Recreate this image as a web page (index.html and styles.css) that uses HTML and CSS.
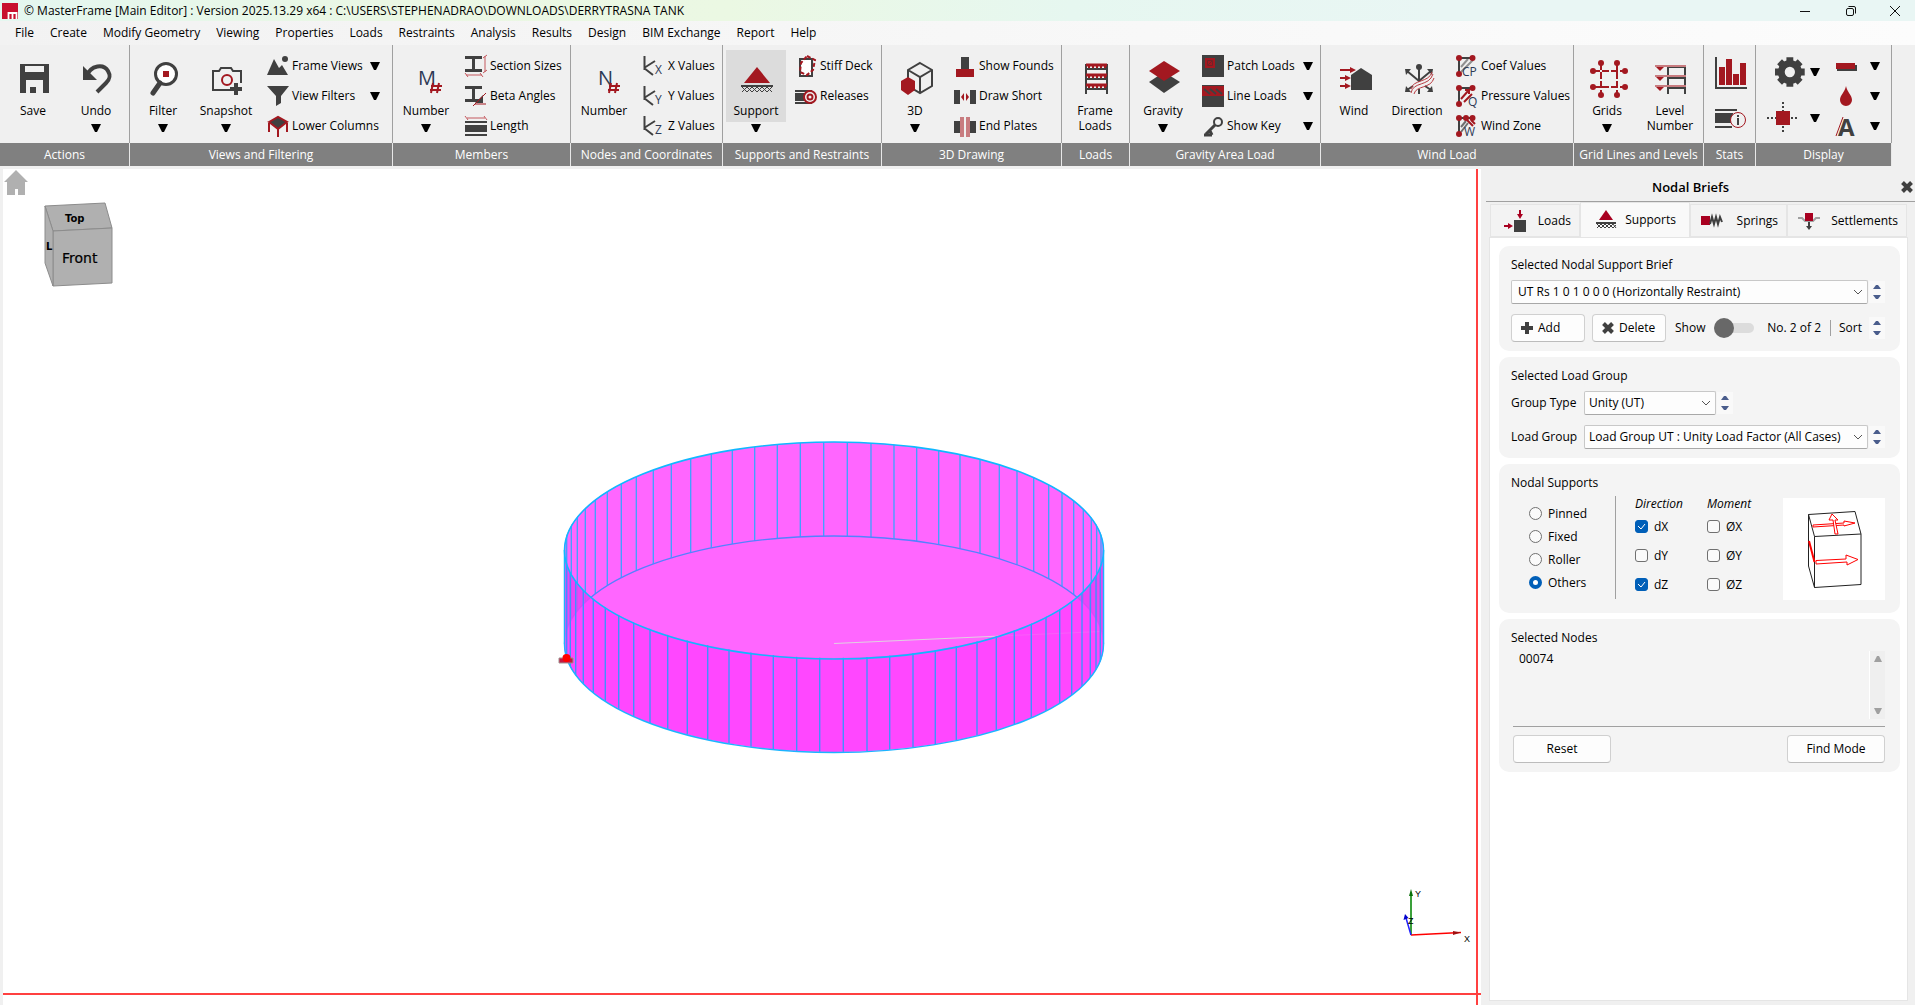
FILE: index.html
```html
<!DOCTYPE html>
<html lang="en">
<head>
<meta charset="utf-8">
<title>MasterFrame [Main Editor]</title>
<link rel="stylesheet" href="styles.css">
</head>
<body>
<svg class="defs" aria-hidden="true">
  <symbol id="arrow" viewBox="0 0 10 8"><path d="M0 0H10L6 8H4Z"/></symbol>
  <symbol id="spin-up" viewBox="0 0 8 5"><path d="M0 5L3 1H5L8 5Z" fill="#4a5d8c"/></symbol>
  <symbol id="spin-down" viewBox="0 0 8 5"><path d="M0 0L3 4H5L8 0Z" fill="#4a5d8c"/></symbol>
  <symbol id="ibeam" viewBox="0 0 22 22"><path d="M0 1H17V4H10V14H17V17H0V14H7V4H0Z" fill="#404040"/></symbol>
  <symbol id="axes" viewBox="0 0 22 22"><path d="M1.500 1V15M1 13L12 6M1 13L10 20" fill="none" stroke="#404040" stroke-width="2"/></symbol>
  <symbol id="windframe" viewBox="0 0 22 22"><path d="M3 3H17M3 3V18" stroke="#404040" stroke-width="2"/><circle cx="3" cy="3" r="3"/><circle cx="16.500" cy="3" r="3"/><circle cx="3" cy="19" r="3"/></symbol>
</svg>

<header class="titlebar">
  <svg class="logo" viewBox="0 0 16 16"><path d="M0 0H16V16H0Z" fill="#c8102e"/><path d="M6.500 16V10H14.500V16M10.500 10V16" fill="none" stroke="#fff" stroke-width="1.800"/></svg>
  <span class="title">© MasterFrame [Main Editor] : Version 2025.13.29 x64 : C:\USERS\STEPHENADRAO\DOWNLOADS\DERRYTRASNA TANK</span>
  <button class="win" aria-label="Minimise"><svg viewBox="0 0 12 12"><path d="M1 6.500H11"/></svg></button>
  <button class="win" aria-label="Restore"><svg viewBox="0 0 12 12"><rect x="1.500" y="3.500" width="7" height="7" rx="1.500"/><path d="M3.500 1.500H9Q10.500 1.500 10.500 3V8.500"/></svg></button>
  <button class="win" aria-label="Close"><svg viewBox="0 0 12 12"><path d="M1 1L11 11M11 1L1 11"/></svg></button>
</header>

<nav class="menu">
  <button>File</button><button>Create</button><button>Modify Geometry</button><button>Viewing</button><button>Properties</button><button>Loads</button><button>Restraints</button><button>Analysis</button><button>Results</button><button>Design</button><button>BIM Exchange</button><button>Report</button><button>Help</button>
</nav>

<div class="ribbon">
  <section class="group">
    <div class="tools">
      <div class="tool"><button class="big"><svg viewBox="0 0 40 40"><path d="M7 5H36V34H7ZM12 7V13H31V7ZM13 21V34H30V21Z" fill="#404040" fill-rule="evenodd"/><path d="M17 28H23V34H17Z" fill="#404040"/></svg>Save</button></div>
      <div class="tool"><button class="big"><svg viewBox="0 0 40 40"><path d="M10 18C15 5 28 5 32 12C35 17 34 20 30 24L21 33" fill="none" stroke="#404040" stroke-width="4"/><path d="M7 7V21H21Z" fill="#404040"/></svg>Undo</button><button class="drop" aria-label="Undo options"><svg><use href="#arrow"/></svg></button></div>
    </div>
    <h2>Actions</h2>
  </section>
  <section class="group views">
    <div class="tools">
      <div class="tool"><button class="big"><svg viewBox="0 0 40 40"><circle cx="23" cy="15" r="10.500" fill="#fff" stroke="#404040" stroke-width="3"/><path d="M20 12H26V18H20Z" fill="#a31820"/><path d="M17 24L10 34" stroke="#404040" stroke-width="5" stroke-linecap="round"/></svg>Filter</button><button class="drop" aria-label="Filter options"><svg><use href="#arrow"/></svg></button></div>
      <div class="tool"><button class="big"><svg viewBox="0 0 40 40"><path d="M24 31H7V12H13L15 9H25L27 12H35V24" fill="none" stroke="#404040" stroke-width="2"/><circle cx="21" cy="21" r="5" fill="none" stroke="#a31820" stroke-width="2"/><path d="M30 24V36M24 30H36" stroke="#404040" stroke-width="4"/></svg>Snapshot</button><button class="drop" aria-label="Snapshot options"><svg><use href="#arrow"/></svg></button></div>
      <ul class="rows">
        <li><button class="small"><svg viewBox="0 0 22 22"><path d="M0 20L7 4L12 13L15 10L21 20Z" fill="#404040"/><circle cx="18" cy="4" r="3" fill="#404040"/></svg>Frame Views</button><button class="drop" aria-label="Frame Views options"><svg><use href="#arrow"/></svg></button></li>
        <li><button class="small"><svg viewBox="0 0 22 22"><path d="M0 1H22L14 11V18L9 21V11Z" fill="#404040"/></svg>View Filters</button><button class="drop" aria-label="View Filters options"><svg><use href="#arrow"/></svg></button></li>
        <li><button class="small"><svg viewBox="0 0 22 22"><path d="M2 7L11 2L20 7L11 14Z" fill="#404040" stroke="#a31820" stroke-width="2"/><path d="M2 8V17M20 8V17M11 14V22" stroke="#a31820" stroke-width="2"/></svg>Lower Columns</button></li>
      </ul>
    </div>
    <h2>Views and Filtering</h2>
  </section>
  <section class="group">
    <div class="tools">
      <div class="tool"><button class="big"><svg viewBox="0 0 40 40"><text x="12" y="26" class="letter">M</text><path d="M27 24L25 34M33 24L31 34M25 27H36M24 31H35" stroke="#a31820" stroke-width="2"/></svg>Number</button><button class="drop" aria-label="Number options"><svg><use href="#arrow"/></svg></button></div>
      <ul class="rows">
        <li><button class="small"><svg viewBox="0 0 22 22"><use href="#ibeam"/><path d="M20 1V17M1 20H17M18 3L22 0M18 18L22 15M0 18L3 22M15 18L18 22" stroke="#c4585e"/></svg>Section Sizes</button></li>
        <li><button class="small"><svg viewBox="0 0 22 22"><use href="#ibeam"/><path d="M10 18L18 10V18Z" fill="#404040"/><path d="M8 21L21 8M10 19H21" stroke="#a31820"/></svg>Beta Angles</button></li>
        <li><button class="small"><svg viewBox="0 0 22 22"><path d="M0 7H22M0 20H22" stroke="#404040" stroke-width="2"/><path d="M0 10H22V17H0Z" fill="#404040"/><path d="M2 3H20M0 1L3 5M19 1L22 5" stroke="#c4585e"/></svg>Length</button></li>
      </ul>
    </div>
    <h2>Members</h2>
  </section>
  <section class="group">
    <div class="tools">
      <div class="tool"><button class="big"><svg viewBox="0 0 40 40"><text x="14" y="26" class="letter">N</text><path d="M27 24L25 34M33 24L31 34M25 27H36M24 31H35" stroke="#a31820" stroke-width="2"/></svg>Number</button></div>
      <ul class="rows">
        <li><button class="small"><svg viewBox="0 0 22 22"><use href="#axes"/><text x="12" y="19" class="sub">X</text></svg>X Values</button></li>
        <li><button class="small"><svg viewBox="0 0 22 22"><use href="#axes"/><text x="12" y="19" class="sub">Y</text></svg>Y Values</button></li>
        <li><button class="small"><svg viewBox="0 0 22 22"><use href="#axes"/><text x="12" y="19" class="sub">Z</text></svg>Z Values</button></li>
      </ul>
    </div>
    <h2>Nodes and Coordinates</h2>
  </section>
  <section class="group">
    <div class="tools">
      <div class="tool"><button class="big active"><svg viewBox="0 0 40 40"><path d="M21 8L34 24H8Z" fill="#a31820"/><path d="M5 27H37" stroke="#404040" stroke-width="2"/><path d="M6 33L11 28L16 33L21 28L26 33L31 28L36 33M6 28L11 33L16 28L21 33L26 28L31 33L36 28" fill="none" stroke="#404040"/></svg>Support</button><button class="drop" aria-label="Support options"><svg><use href="#arrow"/></svg></button></div>
      <ul class="rows">
        <li><button class="small"><svg viewBox="0 0 22 22"><path d="M5 4H17V21H5Z" fill="#fff" stroke="#404040" stroke-width="2"/><path d="M12 1L20 5L18 15L12 20L5 17L6 8Z" fill="none" stroke="#a31820" stroke-width="2" stroke-dasharray="4 2"/></svg>Stiff Deck</button></li>
        <li><button class="small"><svg viewBox="0 0 22 22"><path d="M0 6H17M0 18H17" stroke="#404040" stroke-width="2"/><path d="M0 8H10V16H0Z" fill="#404040"/><circle cx="15" cy="12" r="6" fill="none" stroke="#a31820" stroke-width="2"/><circle cx="15" cy="12" r="2.500" fill="none" stroke="#a31820" stroke-width="2"/></svg>Releases</button></li>
      </ul>
    </div>
    <h2>Supports and Restraints</h2>
  </section>
  <section class="group">
    <div class="tools">
      <div class="tool"><button class="big"><svg viewBox="0 0 40 40"><path d="M25 4L37 11V27L25 34L13 27V11ZM13 11L25 18L37 11M25 18V34" fill="none" stroke="#404040" stroke-width="2"/><path d="M13 18L20 22V31L13 36L6 31V22Z" fill="#a31820"/></svg>3D</button><button class="drop" aria-label="3D options"><svg><use href="#arrow"/></svg></button></div>
      <ul class="rows">
        <li><button class="small"><svg viewBox="0 0 22 22"><path d="M7 2H15V14H7Z" fill="#404040"/><path d="M2 14H20V22H2Z" fill="#a31820"/></svg>Show Founds</button></li>
        <li><button class="small"><svg viewBox="0 0 22 22"><path d="M0 5H6V19H0ZM16 5H22V19H16Z" fill="#404040"/><path d="M7 12L10 8V16ZM15 12L12 8V16Z" fill="#a31820"/></svg>Draw Short</button></li>
        <li><button class="small"><svg viewBox="0 0 22 22"><path d="M0 6H6V18H0ZM16 6H22V18H16Z" fill="#404040"/><path d="M6 2H10V22H6ZM12 2H16V22H12Z" fill="#c87c80"/></svg>End Plates</button></li>
      </ul>
    </div>
    <h2>3D Drawing</h2>
  </section>
  <section class="group">
    <div class="tools">
      <div class="tool"><button class="big"><svg viewBox="0 0 40 40"><path d="M11 35V5M32 35V5M11 10H32M11 20H32M11 30H32" stroke="#404040" stroke-width="2"/><path d="M11 6H32M11 16H32M11 26H32" stroke="#a31820" stroke-width="3"/><path d="M13 8H31M13 18H31M13 28H31" stroke="#a31820" stroke-width="2" stroke-dasharray="2 2"/></svg>Frame<br>Loads</button></div>
    </div>
    <h2>Loads</h2>
  </section>
  <section class="group gravity">
    <div class="tools">
      <div class="tool"><button class="big"><svg viewBox="0 0 40 40"><path d="M6 23L21 13L37 23L21 34Z" fill="#404040"/><path d="M6 12L21 2L37 12L21 22Z" fill="#a31820"/></svg>Gravity</button><button class="drop" aria-label="Gravity options"><svg><use href="#arrow"/></svg></button></div>
      <ul class="rows">
        <li><button class="small"><svg viewBox="0 0 22 22"><path d="M0 0H22V22H0Z" fill="#404040"/><path d="M3 3H13V13H3Z" fill="#a31820"/><path d="M5.500 5.500H10.500V10.500H5.500ZM6 10L10 6" fill="none" stroke="#702428"/></svg>Patch Loads</button><button class="drop" aria-label="Patch Loads options"><svg><use href="#arrow"/></svg></button></li>
        <li><button class="small"><svg viewBox="0 0 22 22"><path d="M0 0H22V22H0Z" fill="#404040"/><path d="M0 1H22V11H0Z" fill="#a31820"/><path d="M2 4L8 9M8 4L14 9M14 4L20 9" stroke="#404040" stroke-width="2"/></svg>Line Loads</button><button class="drop" aria-label="Line Loads options"><svg><use href="#arrow"/></svg></button></li>
        <li><button class="small"><svg viewBox="0 0 22 22"><circle cx="16" cy="7" r="4" fill="none" stroke="#404040" stroke-width="2"/><path d="M13 10L4 19M2 20H10M8 16L10 20" fill="none" stroke="#404040" stroke-width="3"/></svg>Show Key</button><button class="drop" aria-label="Show Key options"><svg><use href="#arrow"/></svg></button></li>
      </ul>
    </div>
    <h2>Gravity Area Load</h2>
  </section>
  <section class="group">
    <div class="tools">
      <div class="tool"><button class="big"><svg viewBox="0 0 40 40"><path d="M17 16L27 9L38 16V31H17Z" fill="#404040"/><path d="M6 11H16M6 19H11M6 27H11" stroke="#a31820" stroke-width="2"/><path d="M16 8L22 11L16 14ZM11 16L17 19L11 22ZM11 24L17 27L11 30Z" fill="#a31820"/></svg>Wind</button></div>
      <div class="tool"><button class="big"><svg viewBox="0 0 40 40"><path d="M22 8V22M22 30V35M10 12L22 22L34 12M10 31L16 27M34 31L28 27" fill="none" stroke="#404040" stroke-width="2"/><circle cx="22" cy="8" r="3" fill="#404040"/><path d="M8 10H14L9 16ZM36 10H30L35 16ZM8 33H14L9 27ZM36 33H30L35 27Z" fill="#404040"/><path d="M14 34C16 22 32 28 36 15M14 30C16 20 32 24 35 13M17 35C19 26 34 30 37 19" fill="none" stroke="#b8383f" stroke-width="1"/></svg>Direction</button><button class="drop" aria-label="Direction options"><svg><use href="#arrow"/></svg></button></div>
      <ul class="rows">
        <li><button class="small"><svg class="red" viewBox="0 0 22 22"><path d="M5 12L12 4M5 17L17 5" stroke="#909090" stroke-width="2"/><use href="#windframe"/><text x="6" y="21" class="sub">CP</text></svg>Coef Values</button></li>
        <li><button class="small"><svg class="red" viewBox="0 0 22 22"><use href="#windframe"/><path d="M5 14L12 6M9 5H13V9M8 17L16 9" fill="none" stroke="#a31820" stroke-width="2"/><text x="12" y="21" class="sub">Q</text></svg>Pressure Values</button></li>
        <li><button class="small"><svg class="red" viewBox="0 0 22 22"><path d="M5 12L10 6M5 17L12 8" stroke="#707070" stroke-width="2"/><use href="#windframe"/><circle cx="10" cy="3" r="3"/><path d="M11 5L17 11M15 5L19 9" stroke="#a31820" stroke-width="2"/><text x="8" y="21" class="sub">W</text></svg>Wind Zone</button></li>
      </ul>
    </div>
    <h2>Wind Load</h2>
  </section>
  <section class="group">
    <div class="tools">
      <div class="tool"><button class="big"><svg viewBox="0 0 40 40"><path d="M14 4V36M30 4V36M6 12H38M6 28H38" stroke="#a31820" stroke-width="2" stroke-dasharray="7 2"/><g fill="#a31820"><circle cx="14" cy="4" r="3"/><circle cx="30" cy="4" r="3"/><circle cx="14" cy="36" r="3"/><circle cx="30" cy="36" r="3"/><circle cx="6" cy="12" r="3"/><circle cx="38" cy="12" r="3"/><circle cx="6" cy="28" r="3"/><circle cx="38" cy="28" r="3"/></g></svg>Grids</button><button class="drop" aria-label="Grids options"><svg><use href="#arrow"/></svg></button></div>
      <div class="tool"><button class="big"><svg viewBox="0 0 40 40"><path d="M18 35V8H35V35M18 19H35M18 29H35" fill="none" stroke="#404040" stroke-width="2"/><path d="M5 7H36M5 17H36M5 27H36" stroke="#c87c80" stroke-width="2"/><path d="M6 8H14L10 12ZM6 18H14L10 22ZM6 28H14L10 32Z" fill="#a31820"/></svg>Level<br>Number</button></div>
    </div>
    <h2>Grid Lines and Levels</h2>
  </section>
  <section class="group">
    <div class="tools stats">
      <button class="icon" aria-label="Statistics"><svg class="large" viewBox="0 0 32 32"><path d="M1 0V31H32" fill="none" stroke="#404040" stroke-width="2"/><path d="M4 10H10V28H4ZM11 2H17V28H11ZM18 17H24V28H18ZM25 6H31V28H25Z" fill="#a31820"/></svg></button>
      <button class="icon" aria-label="Member information"><svg class="large" viewBox="0 0 32 32"><path d="M0 7H22M0 24H17" stroke="#404040" stroke-width="2"/><path d="M0 10H18V20H0Z" fill="#404040"/><circle cx="23" cy="17" r="7.500" fill="#f0f0f0" stroke="#a31820"/><path d="M23 12V14M23 15V22" stroke="#404040" stroke-width="2"/></svg></button>
    </div>
    <h2>Stats</h2>
  </section>
  <section class="group">
    <div class="tools display">
      <div class="pairs">
        <div class="pair"><button class="icon" aria-label="Display settings"><svg class="large" viewBox="-4 2 28 28"><path d="M16 3V29M3 16H29M7 7L25 25M25 7L7 25" stroke="#404040" stroke-width="6"/><circle cx="16" cy="16" r="7.500" fill="#f0f0f0" stroke="#404040" stroke-width="6"/></svg></button><button class="drop" aria-label="Settings options"><svg><use href="#arrow"/></svg></button></div>
        <div class="pair"><button class="icon" aria-label="Node display"><svg class="large" viewBox="0 0 32 32"><path d="M16 0V32M0 16H32" stroke="#404040" stroke-width="2" stroke-dasharray="2 2"/><path d="M9 9H23V23H9Z" fill="#a31820"/></svg></button><button class="drop" aria-label="Node display options"><svg><use href="#arrow"/></svg></button></div>
      </div>
      <ul class="rows">
        <li><button class="small" aria-label="Member colour"><svg viewBox="0 0 22 22"><path d="M2 10H22V16H2Z" fill="#404040"/><path d="M1 8H20V14H1Z" fill="#a31820"/></svg></button><button class="drop" aria-label="Member colour options"><svg><use href="#arrow"/></svg></button></li>
        <li><button class="small" aria-label="Ink colour"><svg viewBox="0 0 22 22"><path d="M11 1C12 7 17 10 17 15A6 6 0 0 1 5 15C5 10 10 7 11 1Z" fill="#a31820"/></svg></button><button class="drop" aria-label="Ink colour options"><svg><use href="#arrow"/></svg></button></li>
        <li><button class="small" aria-label="Text style"><svg viewBox="0 0 22 22"><path d="M1 21L8 2" stroke="#a31820"/><text x="3" y="21" class="face">A</text></svg></button><button class="drop" aria-label="Text style options"><svg><use href="#arrow"/></svg></button></li>
      </ul>
    </div>
    <h2>Display</h2>
  </section>
</div>

<main class="workspace">
  <div class="viewport">
    <button class="home" aria-label="Home view"><svg viewBox="0 0 24 25"><path d="M12 0L24 12H21V25H14V19H11V25H3V12H0Z" fill="#b0b0b0"/></svg></button>
    <svg class="cube" viewBox="0 0 70 86"><g fill="#b0b0b0" stroke="#8c8c8c"><path d="M1 4L61 1L68 26L9 29Z"/><path d="M9 29L68 26V81L9 84Z"/><path d="M1 4L9 29V84L1 61Z"/></g><text x="18" y="61" class="face-front">Front</text><text x="21" y="20" class="face-top">Top</text><text x="2" y="48" class="face-top">L</text></svg>

    <svg class="tank" viewBox="550 430 560 335">
      <defs>
        <clipPath id="back"><path d="M563 550A270 108 0 0 1 1103 550V644A270 108 0 0 0 563 644Z"/></clipPath>
        <clipPath id="front"><path d="M563 550A270 108 0 0 0 1103 550V644A270 108 0 0 1 563 644Z"/></clipPath>
      </defs>
      <path d="M563 550A270 108 0 0 1 1103 550V644A270 108 0 0 1 563 644Z" fill="#ff66ff"/>
      <g clip-path="url(#back)" stroke="#38a4ff" stroke-width="1.300">
        <path d="M565.700 430V765M570.300 430V765M576.300 430V765M584.300 430V765M594.300 430V765M606.300 430V765M620.300 430V765M635.300 430V765M652.300 430V765M670.300 430V765M689.700 430V765M710.300 430V765M731.300 430V765M753.700 430V765M776.300 430V765M799.300 430V765M822.700 430V765M846.300 430V765M870 430V765M893 430V765M915.700 430V765M937.700 430V765M959 430V765M979 430V765M998.300 430V765M1016 430V765M1032.700 430V765M1047.700 430V765M1061 430V765M1072.700 430V765M1082.300 430V765M1090.300 430V765M1095.700 430V765M1100 430V765"/>
      </g>
      <path d="M563.500 644A269.500 108 0 0 1 1102.500 644" fill="none" stroke="#5580ff" stroke-width="1.300"/>
      <path d="M833 643.500L1100 631.500" stroke="#e0d0e0"/>
      <path d="M563 550A270 108 0 0 0 1103 550V644A270 108 0 0 1 563 644Z" fill="#ff40ff" fill-opacity=".8"/>
      <path d="M563 550A270 108 0 0 0 590 597.500A270 108 0 0 0 563 644ZM1103 550A270 108 0 0 1 1076 597.500A270 108 0 0 1 1103 644Z" fill="#d040e8" fill-opacity=".4"/>
      <g clip-path="url(#front)" stroke="#4090ff" stroke-width="1.400">
        <path d="M565.700 430V765M569.300 430V765M574.700 430V765M582.300 430V765M592.300 430V765M604.300 430V765M617.700 430V765M632.700 430V765M649 430V765M666.700 430V765M686.300 430V765M706.700 430V765M728 430V765M750 430V765M772.300 430V765M795.700 430V765M818.700 430V765M842.300 430V765M866 430V765M888.700 430V765M912 430V765M934.300 430V765M955.300 430V765M976 430V765M995.300 430V765M1013.300 430V765M1030.300 430V765M1045 430V765M1058.700 430V765M1070.700 430V765M1081 430V765M1089.300 430V765M1095 430V765M1099.300 430V765"/>
      </g>
      <path d="M563.500 550V644A269.500 108.500 0 0 0 1102.500 644V550" fill="none" stroke="#1cb4ff" stroke-width="1.500"/>
      <ellipse cx="833" cy="550.500" rx="269.500" ry="108.500" fill="none" stroke="#10b8ff" stroke-width="1.600"/>
      <path d="M558 658H572V663H558Z" fill="#c41840" stroke="#a09090"/>
      <circle cx="565.500" cy="658" r="4" fill="#f00"/>
    </svg>

    <svg class="triad" viewBox="1400 885 76 65">
      <path d="M1411 935V893" stroke="#3aa03a" stroke-width="2"/><path d="M1409 896L1411 889L1413 896Z" fill="#087008"/>
      <path d="M1411 935L1461 932.500" stroke="#f00" stroke-width="1.500"/><path d="M1453 931V935L1461 932.500Z" fill="#a01010"/>
      <path d="M1411 935L1406 918" stroke="#22f" stroke-width="1.500"/><path d="M1403.500 920L1405 914L1408.500 918Z" fill="#00c"/>
      <text x="1415" y="897">Y</text><text x="1408" y="924">Z</text><text x="1464" y="942">X</text>
    </svg>
    <div class="rule-v"></div>
    <div class="rule-h"></div>
  </div>

  <aside class="panel">
    <header class="panel-head"><h1>Nodal Briefs</h1><button class="close" aria-label="Close panel"><svg viewBox="0 0 12 12"><path d="M1.500 1.500L10.500 10.500M10.500 1.500L1.500 10.500" stroke="#404040" stroke-width="4"/></svg></button></header>
    <div class="tabs" role="tablist">
      <button role="tab" class="tab"><svg viewBox="0 0 24 24"><path d="M11 11H23V23H11Z" fill="#404040"/><path d="M17 1V6M1 17H6" stroke="#a80020" stroke-width="2"/><path d="M14 5H20L17 10ZM5 14V20L10 17Z" fill="#a80020"/></svg>Loads</button>
      <button role="tab" class="tab current" aria-selected="true"><svg viewBox="0 0 24 24"><path d="M12 2L19 12H5Z" fill="#a80020"/><path d="M2 15H22" stroke="#404040" stroke-width="2"/><path d="M3 20L7 16L11 20L15 16L19 20L22 17M3 16L7 20L11 16L15 20L19 16L22 20" fill="none" stroke="#404040"/></svg>Supports</button>
      <button role="tab" class="tab"><svg viewBox="0 0 24 24"><path d="M1 7H10V16H1Z" fill="#a80020"/><path d="M10 15L12 8L14 15L16 8L18 15L20 8L22 13" fill="none" stroke="#404040" stroke-width="2"/></svg>Springs</button>
      <button role="tab" class="tab"><svg viewBox="0 0 24 24"><path d="M1 9H5L8 12H16L19 9H23" fill="none" stroke="#a0a0a0" stroke-width="2"/><path d="M8 4H16V12H8Z" fill="#a80020"/><path d="M12 13V18" stroke="#404040" stroke-width="2"/><path d="M9 17H15L12 21Z" fill="#404040"/></svg>Settlements</button>
    </div>
    <div class="pane">
      <section class="card">
        <h3><label for="brief">Selected Nodal Support Brief</label></h3>
        <div class="line">
          <select id="brief" class="wide indent"><option>UT Rs 1 0 1 0 0 0 (Horizontally Restraint)</option></select>
          <span class="spin"><button aria-label="Previous brief"><svg><use href="#spin-up"/></svg></button><button aria-label="Next brief"><svg><use href="#spin-down"/></svg></button></span>
        </div>
        <div class="line actions">
          <button class="push"><svg viewBox="0 0 12 12"><path d="M6 0V12M0 6H12" stroke="#404040" stroke-width="4"/></svg>Add</button>
          <button class="push"><svg viewBox="0 0 12 12"><path d="M1.500 1.500L10.500 10.500M10.500 1.500L1.500 10.500" stroke="#404040" stroke-width="4"/></svg>Delete</button>
          <label class="show">Show<input type="checkbox" class="switch"></label>
          <span class="count">No. 2 of 2</span>
          <span class="sort">Sort</span>
          <span class="spin"><button aria-label="Sort up"><svg><use href="#spin-up"/></svg></button><button aria-label="Sort down"><svg><use href="#spin-down"/></svg></button></span>
        </div>
      </section>
      <section class="card">
        <h3>Selected Load Group</h3>
        <div class="line">
          <label class="name" for="gtype">Group Type</label>
          <select id="gtype" class="short"><option>Unity (UT)</option></select>
          <span class="spin"><button aria-label="Previous type"><svg><use href="#spin-up"/></svg></button><button aria-label="Next type"><svg><use href="#spin-down"/></svg></button></span>
        </div>
        <div class="line second">
          <label class="name" for="lgroup">Load Group</label>
          <select id="lgroup" class="wide"><option>Load Group UT : Unity Load Factor (All Cases)</option></select>
          <span class="spin"><button aria-label="Previous group"><svg><use href="#spin-up"/></svg></button><button aria-label="Next group"><svg><use href="#spin-down"/></svg></button></span>
        </div>
      </section>
      <section class="card">
        <h3>Nodal Supports</h3>
        <div class="supports">
          <div class="kinds">
            <label><input type="radio" name="kind">Pinned</label>
            <label><input type="radio" name="kind">Fixed</label>
            <label><input type="radio" name="kind">Roller</label>
            <label><input type="radio" name="kind" checked>Others</label>
          </div>
          <div class="freedoms">
            <em>Direction</em>
            <label><input type="checkbox" checked>dX</label>
            <label><input type="checkbox">dY</label>
            <label><input type="checkbox" checked>dZ</label>
          </div>
          <div class="freedoms">
            <em>Moment</em>
            <label><input type="checkbox">ØX</label>
            <label><input type="checkbox">ØY</label>
            <label><input type="checkbox">ØZ</label>
          </div>
          <svg class="preview" viewBox="0 0 102 102"><g fill="none" stroke="#222"><path d="M25.500 16.500L72 13.500L78 36L31.500 38.500ZM31.500 38.500V89.500L78 86.500V36M25.500 16.500V68L31.500 89.500"/></g><path d="M26 43L31.500 64" stroke="#f00" stroke-width="2"/><g fill="#fff" stroke="#f00"><path d="M33 62.500L63 61V57L75 61.500L64 67V64L33 66Z"/><path d="M30 27L61 25V23L72 25L61 28V27L30 29Z"/><path d="M52 36L50 22H46L49 16L55 22H52L55 36Z"/></g></svg>
        </div>
      </section>
      <section class="card nodes">
        <h3><label for="nodes">Selected Nodes</label></h3>
        <div class="list">
          <textarea id="nodes" readonly>00074</textarea>
          <span class="scroll"><button aria-label="Scroll up"><svg viewBox="0 0 8 6"><path d="M0 6L3 0H5L8 6Z"/></svg></button><button aria-label="Scroll down"><svg viewBox="0 0 8 6"><path d="M0 0L3 6H5L8 0Z"/></svg></button></span>
        </div>
        <div class="footer"><button class="push wide-push">Reset</button><button class="push wide-push">Find Mode</button></div>
      </section>
    </div>
  </aside>
</main>
</body>
</html>
```
FILE: styles.css
```css
* { box-sizing: border-box; }

body {
  margin: 0;
  min-height: 100vh;
  display: flex;
  flex-direction: column;
  background: #f0f0f0;
  color: #000;
  font: 12px/16px "Open Sans", "Noto Sans", sans-serif;
}

button, select, textarea { font: inherit; color: inherit; }
button { border: 0; padding: 0; background: none; }
h1, h2, h3, ul { margin: 0; padding: 0; font-weight: 400; }
h3 { font-size: 12px; font-weight: 500; }
ul { list-style: none; }
svg { display: block; flex: none; overflow: visible; }
.defs { position: absolute; width: 0; height: 0; }

/* Title bar */
.titlebar {
  display: flex;
  align-items: center;
  height: 21px;
  padding-left: 2px;
  background: linear-gradient(90deg, #e4f7f0 0, #eaf7e4 20%, #ebf8e3 38%, #e6f7f0 56%, #e9f6f4 75%);
}
.logo { width: 16px; height: 16px; }
.title { flex: 1; padding-left: 6px; white-space: nowrap; }
.win { width: 46px; height: 18px; display: grid; place-items: center; }
.win:last-child { width: 41px; }
.win svg { width: 12px; height: 12px; fill: none; stroke: #111; }

/* Menu */
.menu {
  display: flex;
  height: 24px;
  padding-left: 7px;
  background: linear-gradient(90deg, #f2f2f2, #fcfcfc);
}
.menu button { padding: 0 8px; white-space: nowrap; }

/* Ribbon */
.ribbon {
  display: grid;
  grid-template-columns: 130fr 263fr 178fr 152fr 159fr 180fr 68fr 191fr 253fr 130fr 52fr 136fr 23fr;
}
.group { display: flex; flex-direction: column; }
.tools {
  display: flex;
  gap: 3px;
  height: 98px;
  padding-left: 3px;
  border-right: 1px solid #a0a0a0;
}
.group h2 {
  height: 23px;
  font-size: 12px;
  line-height: 23px;
  text-align: center;
  white-space: nowrap;
  color: #fff;
  background: #808080;
  border-right: 1px solid #e8e8e8;
}
.tool { width: 60px; padding-top: 5px; }
.big {
  display: flex;
  flex-direction: column;
  align-items: center;
  width: 60px;
  min-height: 72px;
  padding-top: 9px;
  line-height: 15px;
}
.big svg { width: 40px; height: 40px; margin-bottom: 4px; }
.active { background: #dcdcdc; }
.drop { display: grid; place-items: center; width: 10px; height: 12px; }
.drop svg { width: 10px; height: 8px; }
.tool .drop { width: 60px; }
.rows { flex: 1; padding: 6px 0 0 6px; }
.rows li { display: flex; align-items: center; justify-content: space-between; height: 30px; }
.views .rows { padding-left: 8px; padding-right: 12px; }
.gravity .rows { padding-right: 7px; }
.small { display: flex; align-items: center; gap: 3px; white-space: nowrap; }
.small svg { width: 22px; height: 22px; }
.red { fill: #a31820; }
.letter { font-size: 20px; fill: #2d3a55; }
.sub { font-size: 12px; fill: #2d3a55; }
.face { font-size: 24px; font-weight: 700; fill: #404040; }
.large { width: 32px; height: 32px; }
.stats { flex-direction: column; gap: 14px; padding: 12px 0 0 11px; }
.icon { width: 32px; }
.pairs { display: flex; flex-direction: column; gap: 14px; padding: 11px 0 0 8px; }
.pair { display: flex; align-items: center; gap: 11px; }
.display .rows { padding-left: 12px; padding-right: 11px; }

/* Workspace */
.workspace { flex: 1; display: flex; }
.viewport {
  position: relative;
  flex: 1;
  margin: 3px 0 0 3px;
  overflow: hidden;
  background: #fff;
}
.home { position: absolute; left: 1px; top: 1px; }
.home svg { width: 24px; height: 25px; }
.cube { position: absolute; left: 41px; top: 33px; width: 70px; height: 86px; }
.face-front { font: 14px "DejaVu Sans", sans-serif; stroke: #000; stroke-width: .2; }
.face-top { font: 700 10px "DejaVu Sans", sans-serif; }
.tank { position: absolute; left: 548px; top: 261px; width: 560px; height: 335px; }
.triad { position: absolute; right: 5px; bottom: 55px; width: 76px; height: 65px; }
.triad text { font: 9px "Liberation Sans", sans-serif; }
.rule-v { position: absolute; right: 3px; top: 0; bottom: 0; width: 2px; background: #ff4040; }
.rule-h { position: absolute; left: 0; right: 0; bottom: 10px; height: 2px; background: #ff4040; }

/* Side panel */
.panel { flex: 0 0 434px; display: flex; flex-direction: column; padding-bottom: 4px; }
.panel-head {
  display: flex;
  align-items: center;
  height: 36px;
  margin-left: 5px;
  padding-top: 6px;
  border-bottom: 1px solid #a0a0a0;
}
.panel-head h1 { flex: 1; font-size: 13px; font-weight: 600; text-align: center; }
.close { width: 20px; }
.close svg { width: 12px; height: 12px; margin-left: 6px; }
.tabs {
  display: grid;
  grid-template-columns: 90fr 110fr 97fr 120fr;
  align-items: end;
  height: 35px;
  margin: 0 8px 0 9px;
}
.tab {
  display: flex;
  align-items: center;
  justify-content: space-between;
  height: 33px;
  padding: 0 8px 0 9px;
  background: #f3f3f3;
  border: 1px solid #e5e5e5;
}
.tab:first-child { padding-left: 12px; }
.tab svg { width: 24px; height: 24px; }
.current { height: 35px; padding: 0 13px; background: #f9f9f9; border-bottom: 0; }
.pane {
  flex: 1;
  display: flex;
  flex-direction: column;
  gap: 6px;
  margin: 0 7px 0 8px;
  padding: 8px 7px 8px 9px;
  background: #fff;
  border: 1px solid #e5e5e5;
}
.card { padding: 11px 15px 9px 12px; background: #f4f4f4; border-radius: 10px; }
.line { display: flex; align-items: center; margin-top: 7px; }
.second { margin-top: 10px; }
.name { width: 73px; }
select {
  appearance: none;
  height: 24px;
  padding: 0 20px 0 4px;
  border: 1px solid #c8c8c8;
  border-bottom-color: #a8a8a8;
  border-radius: 2px;
  background: #fdfdfd url("data:image/svg+xml,%3Csvg xmlns='http://www.w3.org/2000/svg' width='10' height='6'%3E%3Cpath d='M1 1L5 5L9 1' fill='none' stroke='%23555'/%3E%3C/svg%3E") no-repeat right 4px center;
}
.wide { flex: 1; min-width: 0; }
.short { width: 132px; }
.indent { padding-left: 6px; }
.spin { display: flex; flex-direction: column; width: 16px; margin-left: 1px; background: #f9f9f9; }
.spin button { display: grid; place-items: center; height: 11px; }
.spin svg { width: 8px; height: 5px; }
.actions { margin-top: 10px; }
.push {
  display: flex;
  align-items: center;
  gap: 5px;
  width: 74px;
  height: 28px;
  margin-right: 7px;
  padding-left: 9px;
  background: #fdfdfd;
  border: 1px solid #d0d0d0;
  border-bottom-color: #bcbcbc;
  border-radius: 4px;
}
.push svg { width: 12px; height: 12px; }
.show { display: flex; align-items: center; gap: 9px; padding-left: 2px; }
.switch {
  appearance: none;
  width: 40px;
  height: 10px;
  margin: 0;
  display: flex;
  align-items: center;
  border-radius: 5px;
  background: #dcdcdc;
}
.switch::before { content: ""; width: 20px; height: 20px; border-radius: 50%; background: #686868; }
.count { flex: 1; text-align: right; padding-right: 9px; white-space: nowrap; }
.sort { padding: 0 6px 0 8px; border-left: 1px solid #a0a0a0; }

.supports { display: flex; margin-top: 5px; margin-bottom: 5px; height: 103px; }
.kinds { width: 105px; padding: 6px 0 0 18px; border-right: 1px solid #a0a0a0; }
.kinds label { display: flex; align-items: center; gap: 6px; height: 23px; }
.freedoms { width: 72px; }
.kinds + .freedoms { margin-left: 19px; }
.freedoms em { display: block; }
.freedoms label { display: flex; align-items: center; gap: 6px; height: 29px; }
.kinds input, .freedoms input {
  appearance: none;
  width: 13px;
  height: 13px;
  margin: 0;
  border: 1px solid #707070;
  border-radius: 3px;
  background: #fafafa;
}
.kinds input { border-radius: 50%; }
.kinds input:checked { border: 4px solid #005fb8; background: #fff; }
.freedoms input:checked {
  border-color: #005fb8;
  background: #005fb8 url("data:image/svg+xml,%3Csvg xmlns='http://www.w3.org/2000/svg' width='9' height='7'%3E%3Cpath d='M1 3L4 6L8 1' fill='none' stroke='%23fff'/%3E%3C/svg%3E") no-repeat center;
}
.preview { width: 102px; height: 102px; margin: 2px 0 0 auto; background: #fff; }

.list { display: flex; height: 68px; margin-top: 5px; }
.list textarea { flex: 1; padding: 0 8px; border: 0; outline: 0; resize: none; background: none; }
.scroll { display: flex; flex-direction: column; justify-content: space-between; width: 16px; padding: 5px 0; background: #efefef; border-left: 1px solid #fff; }
.scroll button { display: grid; place-items: center; }
.scroll svg { width: 8px; height: 6px; fill: #a0a0a0; }
.footer {
  display: flex;
  justify-content: space-between;
  margin: 7px 0 0 2px;
  padding-top: 8px;
  border-top: 1px solid #a0a0a0;
}
.wide-push { width: 98px; margin: 0; padding: 0; justify-content: center; }
```
